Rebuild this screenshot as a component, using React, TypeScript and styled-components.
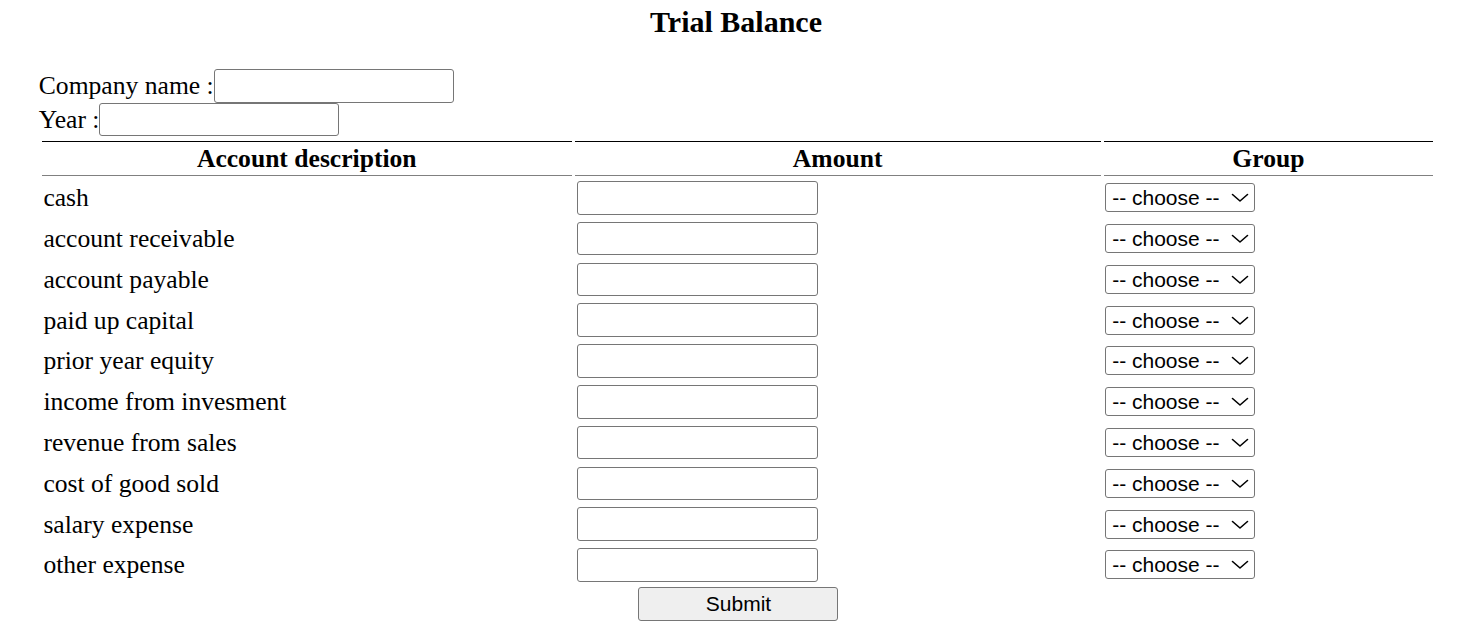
import React from "react";
import styled, { createGlobalStyle } from "styled-components";

const GlobalStyle = createGlobalStyle`
  html, body { margin: 0; padding: 0; background: #ffffff; }
  body {
    font-family: "Liberation Serif", "Times New Roman", serif;
    font-size: 25.6px;
    color: #000000;
  }
  * { box-sizing: border-box; }
`;

const Page = styled.div`
  padding-top: 6px;
`;

const Title = styled.h1`
  margin: 0;
  font-size: 30px;
  line-height: 32px;
  font-weight: bold;
  text-align: center;
`;

const Info = styled.div`
  margin-top: 31px;
  padding-left: 38.8px;
  display: flex;
  flex-direction: column;
`;

const InfoRow = styled.label`
  display: flex;
  align-items: flex-start;
`;

const InfoLabel = styled.span`
  line-height: 33px;
  white-space: pre;
`;

const TextInput = styled.input<{ $w?: number }>`
  width: ${(p) => p.$w ?? 240}px;
  height: 33.6px;
  border: 1px solid #767676;
  border-radius: 3px;
  padding: 1px 3px;
  font-family: "Liberation Sans", Arial, sans-serif;
  font-size: 21px;
  background: #ffffff;
  margin: 0;
`;

const Table = styled.table`
  margin-top: 2px;
  margin-left: 38.8px;
  width: 1397.4px;
  table-layout: fixed;
  border-spacing: 3.2px;
`;

const HeadCell = styled.th<{ $w: number }>`
  width: ${(p) => p.$w}px;
  border-top: 1px solid #000000;
  border-bottom: 1px solid #808080;
  padding: 1.6px;
  font-size: 25.6px;
  line-height: 29.4px;
  font-weight: bold;
  text-align: center;
`;

const Cell = styled.td`
  padding: 2px 1.6px;
  vertical-align: middle;
  line-height: 31px;
`;

const SelectWrap = styled.div`
  position: relative;
  display: block;
  width: 150px;
  height: 29px;
`;

const Select = styled.select`
  appearance: none;
  -webkit-appearance: none;
  display: block;
  width: 150px;
  height: 29px;
  margin: 0;
  padding: 0 26px 0 6px;
  border: 1px solid #767676;
  border-radius: 3px;
  background: #ffffff;
  color: #000000;
  font-family: "Liberation Sans", Arial, sans-serif;
  font-size: 21px;
  line-height: 27px;
`;

const Chevron = styled.svg`
  position: absolute;
  right: 6px;
  top: 10px;
  width: 18px;
  height: 10px;
  pointer-events: none;
`;

const Footer = styled.div`
  margin-left: 39.8px;
  width: 1397.4px;
  display: flex;
  justify-content: center;
`;

const SubmitButton = styled.button`
  width: 200px;
  height: 34px;
  margin: 0;
  padding: 0;
  border: 1px solid #767676;
  border-radius: 3px;
  background: #efefef;
  color: #000000;
  font-family: "Liberation Sans", Arial, sans-serif;
  font-size: 21px;
`;

const AmountInput = styled(TextInput)`
  margin-left: 1px;
`;

const accounts = [
  "cash",
  "account receivable",
  "account payable",
  "paid up capital",
  "prior year equity",
  "income from invesment",
  "revenue from sales",
  "cost of good sold",
  "salary expense",
  "other expense",
];

export default function App() {
  return (
    <>
      <GlobalStyle />
      <Page>
        <Title>Trial Balance</Title>
        <Info>
          <InfoRow>
            <InfoLabel>Company name :</InfoLabel>
            <TextInput type="text" />
          </InfoRow>
          <InfoRow>
            <InfoLabel>Year :</InfoLabel>
            <TextInput type="text" />
          </InfoRow>
        </Info>
        <Table>
          <thead>
            <tr>
              <HeadCell $w={529.6}>Account description</HeadCell>
              <HeadCell $w={525.6}>Amount</HeadCell>
              <HeadCell $w={329.4}>Group</HeadCell>
            </tr>
          </thead>
          <tbody>
            {accounts.map((a) => (
              <tr key={a}>
                <Cell>{a}</Cell>
                <Cell>
                  <AmountInput type="text" $w={241} />
                </Cell>
                <Cell>
                  <SelectWrap>
                    <Select defaultValue="">
                      <option value="">-- choose --</option>
                      <option value="asset">Asset</option>
                      <option value="liability">Liability</option>
                      <option value="equity">Equity</option>
                      <option value="revenue">Revenue</option>
                      <option value="expense">Expense</option>
                    </Select>
                    <Chevron viewBox="0 0 18 10">
                      <path d="M1.5 1.5 L9 8 L16.5 1.5" fill="none" stroke="#000" strokeWidth="1.6" strokeLinecap="round" strokeLinejoin="round" />
                    </Chevron>
                  </SelectWrap>
                </Cell>
              </tr>
            ))}
          </tbody>
        </Table>
        <Footer>
          <SubmitButton type="submit">Submit</SubmitButton>
        </Footer>
      </Page>
    </>
  );
}
